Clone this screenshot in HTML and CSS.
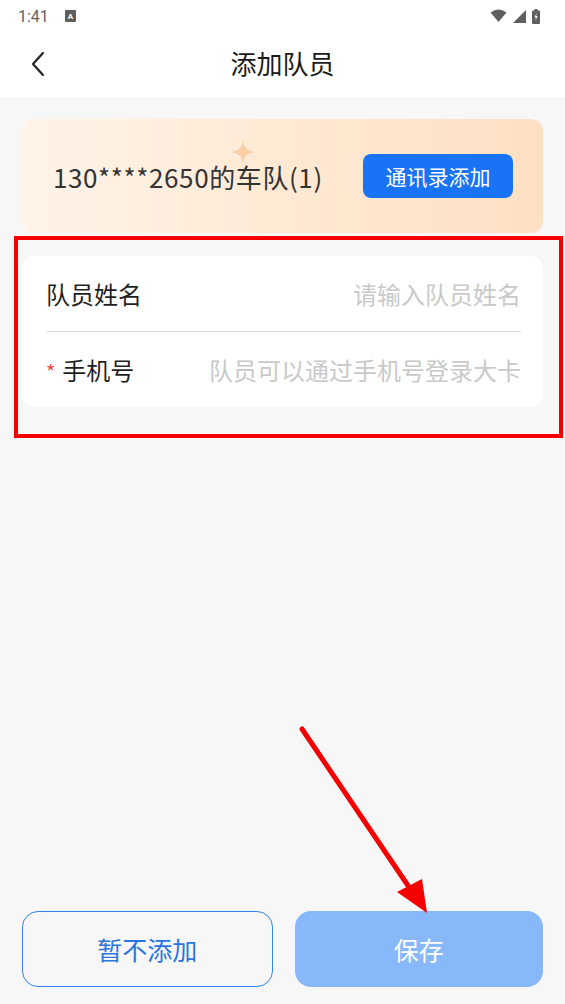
FILE: index.html
```html
<!DOCTYPE html>
<html lang="zh-CN">
<head>
    <meta charset="UTF-8">
    <meta name="viewport" content="width=device-width, initial-scale=1.0">
    <title>添加队员</title>
    <link rel="stylesheet" href="styles.css">
</head>
<body>
    <!-- 状态栏 -->
    <div class="status-bar">
        <div class="status-left">
            <span class="time">1:41</span>
            <span class="status-a">A</span>
        </div>
        <div class="status-right">
            <svg width="17" height="14" viewBox="0 0 17 14"><path d="M0.5 3.5 Q8.5 -2.5 16.5 3.5 L8.5 13 Z" fill="#5f5f5f"/></svg>
            <svg width="13" height="13" viewBox="0 0 13 13"><path d="M13 0 L13 13 L0 13 Z" fill="#5f5f5f"/></svg>
            <svg width="8" height="15" viewBox="0 0 8 15"><rect x="2.5" y="0" width="3" height="2" fill="#5f5f5f"/><rect x="0" y="1.5" width="8" height="13.5" rx="1" fill="#5f5f5f"/><path d="M4.8 3.5 L2.5 8.5 L4 8.5 L3.3 12 L5.6 7 L4.1 7 Z" fill="#fff"/></svg>
        </div>
    </div>
    <!-- 标题栏 -->
    <div class="nav-bar">
        <svg class="nav-back" width="16" height="26" viewBox="0 0 16 26"><path d="M13 2 L3 13 L13 24" fill="none" stroke="#222" stroke-width="2.2" stroke-linecap="round" stroke-linejoin="round"/></svg>
        <div class="nav-title">添加队员</div>
    </div>
    <!-- 内容 -->
    <div class="page">
        <div class="team-card">
            <svg class="sparkle" width="24" height="24" viewBox="0 0 24 24"><path d="M12 0 Q13 11 24 12 Q13 13 12 24 Q11 13 0 12 Q11 11 12 0 Z" fill="#f8c99a" opacity="0.8"/></svg>
            <div class="team-name">130****2650的车队(1)</div>
            <button type="button" class="contact-btn">通讯录添加</button>
        </div>
        <div class="form-card">
            <div class="form-row">
                <label class="form-label">队员姓名</label>
                <input type="text" class="form-input" placeholder="请输入队员姓名">
            </div>
            <div class="form-row">
                <label class="form-label"><span class="required">*</span>手机号</label>
                <input type="text" class="form-input" placeholder="队员可以通过手机号登录大卡">
            </div>
        </div>
        <div class="spacer"></div>
        <div class="footer">
            <button type="button" class="btn btn-ghost">暂不添加</button>
            <button type="button" class="btn btn-save">保存</button>
        </div>
    </div>
    <!-- 标注 -->
    <div class="mark-box"></div>
    <svg class="mark-arrow" width="565" height="1004" viewBox="0 0 565 1004">
        <line x1="302" y1="729" x2="413" y2="893" stroke="#f50000" stroke-width="5" stroke-linecap="round"/>
        <path d="M397 892 L427 913 L422 879 Z" fill="#f50000"/>
    </svg>
</body>
</html>
```

FILE: styles.css
```css
/* 整体 */
* {
    box-sizing: border-box;
}
body {
    margin: 0;
    width: 565px;
    height: 1004px;
    display: flex;
    flex-direction: column;
    font-family: "Noto Sans CJK SC", "Noto Sans", sans-serif;
    background-color: #f7f7f8;
    position: relative;
    overflow: hidden;
}
/* 状态栏 */
.status-bar {
    height: 32px;
    background-color: #fff;
    display: flex;
    justify-content: space-between;
    align-items: center;
    padding: 0 25px 0 18px;
}
.status-left {
    display: flex;
    align-items: center;
    gap: 16px;
}
.time {
    font-family: Roboto, sans-serif;
    font-size: 16px;
    color: #5f5f5f;
}
.status-a {
    width: 11px;
    height: 12px;
    background-color: #5f5f5f;
    color: #fff;
    font-family: Roboto, sans-serif;
    font-size: 8px;
    font-weight: bold;
    display: flex;
    justify-content: center;
    align-items: center;
    border-radius: 1px;
}
.status-right {
    display: flex;
    align-items: center;
    gap: 6px;
}
/* 标题栏 */
.nav-bar {
    height: 65px;
    background-color: #fff;
    display: flex;
    align-items: center;
    justify-content: center;
    padding-bottom: 5px;
    position: relative;
}
.nav-back {
    position: absolute;
    left: 30px;
    top: 19px;
}
.nav-title {
    font-size: 26px;
    color: #1a1a1a;
}
/* 页面内容 */
.page {
    flex: 1;
    display: flex;
    flex-direction: column;
    padding: 22px 22px 17px;
}
.team-card {
    height: 114px;
    border-radius: 12px;
    background: linear-gradient(90deg, #fff4e8 0%, #ffe9d4 50%, #fde0c3 100%);
    display: flex;
    align-items: center;
    justify-content: space-between;
    padding: 0 30px 0 31px;
    position: relative;
}
.sparkle {
    position: absolute;
    left: 209px;
    top: 21px;
}
.team-name {
    font-size: 26px;
    color: #333;
    letter-spacing: 0.6px;
    position: relative;
}
.contact-btn {
    width: 150px;
    height: 44px;
    border: none;
    border-radius: 8px;
    background-color: #1874f5;
    color: #fff;
    font-family: inherit;
    font-size: 21px;
    padding: 0;
}
.form-card {
    margin-top: 23px;
    background-color: #fff;
    border-radius: 12px;
    padding: 0 22px 0 24px;
}
.form-row {
    height: 75px;
    display: flex;
    align-items: center;
    justify-content: space-between;
}
.form-row + .form-row {
    border-top: 1px solid #dedede;
    height: 76px;
}
.form-label {
    font-size: 24px;
    color: #1f1f1f;
    white-space: nowrap;
}
.required {
    color: #f0473f;
    font-size: 20px;
    margin-right: 7px;
}
.form-input {
    flex: 1;
    border: none;
    outline: none;
    background: transparent;
    text-align: right;
    font-family: inherit;
    font-size: 24px;
    padding: 0;
    min-width: 0;
}
.form-input::placeholder {
    color: #c9c9c9;
}
.spacer {
    flex: 1;
}
.footer {
    display: flex;
    gap: 22px;
}
.btn {
    flex: 1;
    height: 76px;
    border-radius: 16px;
    font-family: inherit;
    font-size: 25px;
    padding: 0;
}
.btn-ghost {
    background-color: transparent;
    border: 1.5px solid #3583ea;
    color: #2a76e0;
}
.btn-save {
    background-color: #87b8f9;
    border: none;
    color: #fff;
}
/* 红色标注 */
.mark-box {
    position: absolute;
    left: 14px;
    top: 236px;
    width: 549px;
    height: 202px;
    border: 4px solid #f50000;
}
.mark-arrow {
    position: absolute;
    left: 0;
    top: 0;
    pointer-events: none;
}
```
